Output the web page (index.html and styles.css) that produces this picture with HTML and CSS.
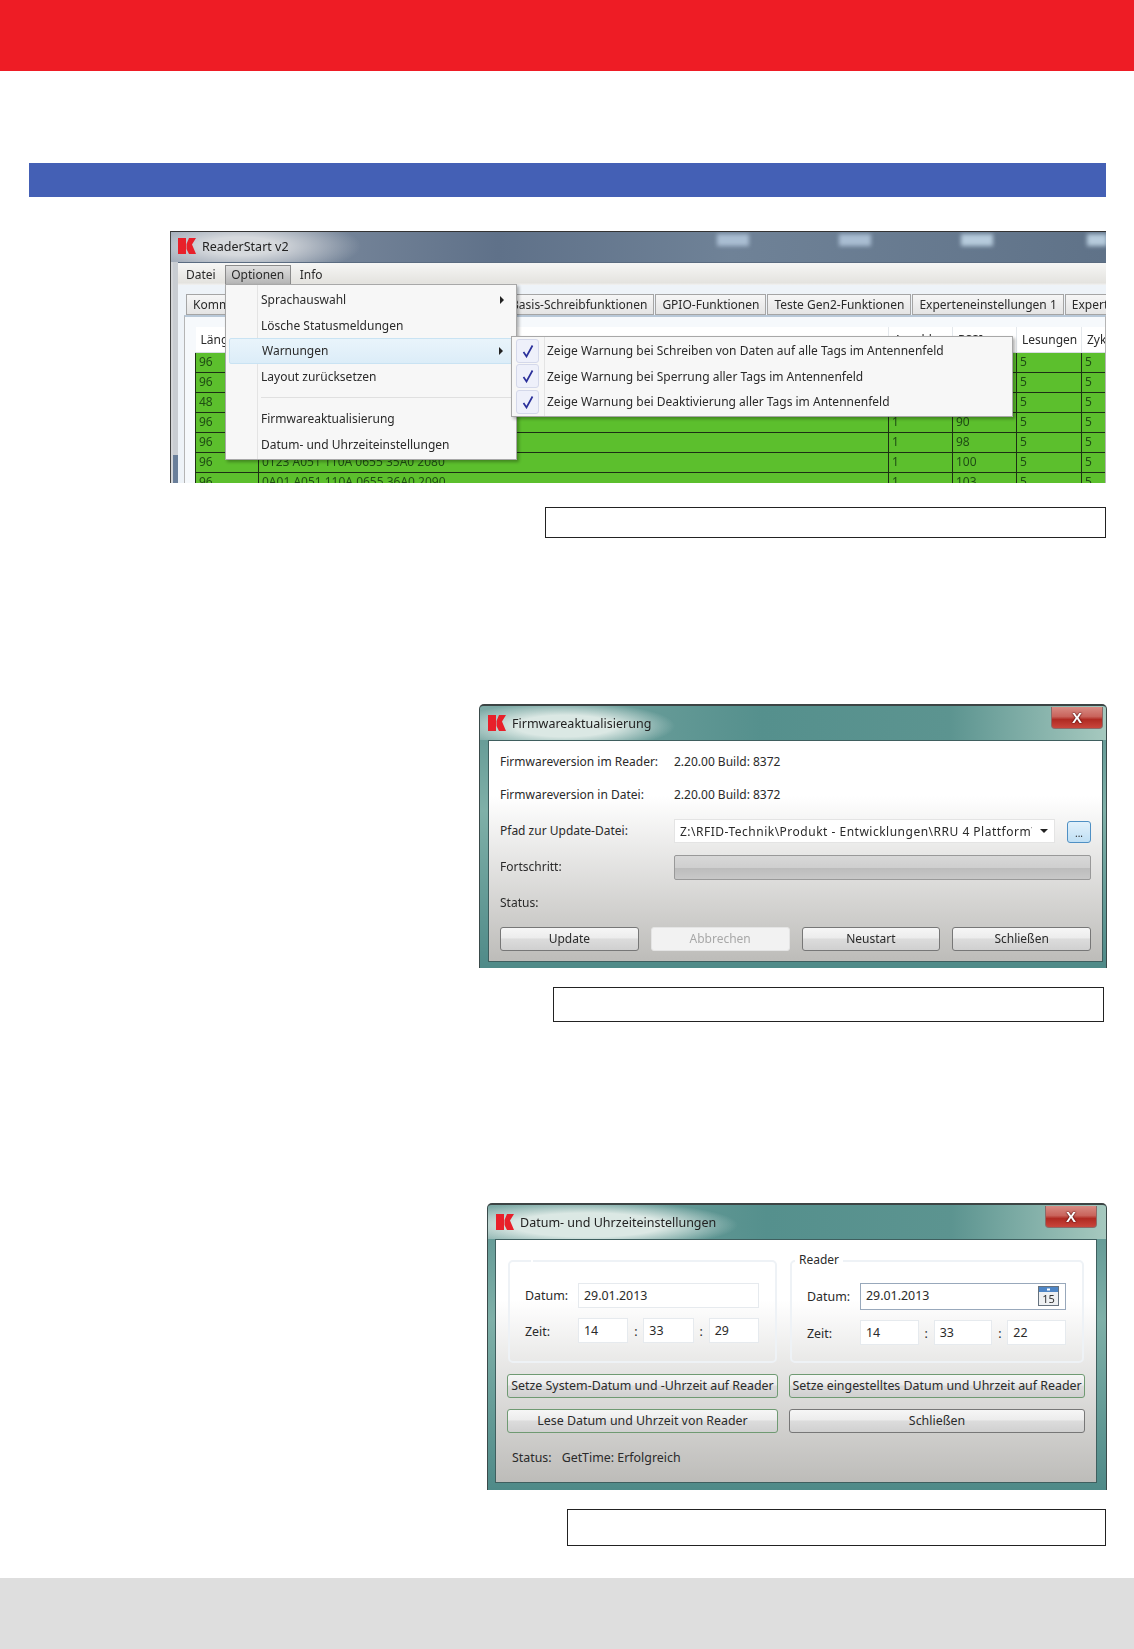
FILE: index.html
```html
<!DOCTYPE html>
<html lang="de">
<head>
    <meta charset="UTF-8">
    <title>ReaderStart v2</title>
    <link rel="stylesheet" href="styles.css">
</head>
<body>
    <svg class="defs" width="0" height="0">
        <symbol id="logo" viewBox="0 0 18 16">
            <path d="M0 0h8v16H0zM8.500 6 11 0h7l-4 6.500L18 16h-7l-2.500-5z"/>
        </symbol>
        <symbol id="check" viewBox="0 0 12 14">
            <path d="M1.500 8l3 4.500L10.500 1.500" fill="none" stroke="currentColor" stroke-width="1.700"/>
        </symbol>
    </svg>

    <div class="topbar"></div>

    <main class="content">
        <div class="bluebar"></div>

        <!-- Hauptfenster mit geoeffnetem Menue -->
        <div class="shot main-shot">
            <div class="titlebar grey">
                <svg class="logo"><use href="#logo"/></svg>
                <span class="title">ReaderStart v2</span>
                <i class="glow g1"></i><i class="glow g2"></i><i class="glow g3"></i><i class="glow g4"></i>
            </div>
            <div class="app">
                <div class="menubar">
                    <span class="menu-item">Datei</span>
                    <span class="menu-item open">Optionen</span>
                    <span class="menu-item">Info</span>
                </div>
                <div class="tabs">
                    <span class="tab tab-first">Kommunikation</span>
                    <span class="tab">Basis-Schreibfunktionen</span>
                    <span class="tab">GPIO-Funktionen</span>
                    <span class="tab">Teste Gen2-Funktionen</span>
                    <span class="tab">Experteneinstellungen 1</span>
                    <span class="tab">Experteneinstellungen 2</span>
                </div>
                <div class="panel">
                    <table class="tags">
                        <colgroup>
                            <col class="c-len"><col class="c-epc"><col class="c-n"><col class="c-n"><col class="c-les"><col class="c-n">
                        </colgroup>
                        <thead>
                            <tr><th>Länge</th><th>EPC</th><th>Anzahl</th><th>RSSI</th><th>Lesungen</th><th>Zyklen</th></tr>
                        </thead>
                        <tbody>
                            <tr><td>96</td><td></td><td></td><td></td><td>5</td><td>5</td></tr>
                            <tr><td>96</td><td></td><td></td><td></td><td>5</td><td>5</td></tr>
                            <tr><td>48</td><td></td><td></td><td></td><td>5</td><td>5</td></tr>
                            <tr><td>96</td><td></td><td>1</td><td>90</td><td>5</td><td>5</td></tr>
                            <tr><td>96</td><td></td><td>1</td><td>98</td><td>5</td><td>5</td></tr>
                            <tr><td>96</td><td>0123 A051 110A 0655 35A0 2080</td><td>1</td><td>100</td><td>5</td><td>5</td></tr>
                            <tr><td>96</td><td>0A01 A051 110A 0655 36A0 2090</td><td>1</td><td>103</td><td>5</td><td>5</td></tr>
                        </tbody>
                    </table>
                </div>
            </div>

            <div class="popup options-menu">
                <div class="pop-row"><span>Sprachauswahl</span><i class="arrow"></i></div>
                <div class="pop-row">Lösche Statusmeldungen</div>
                <div class="pop-row active"><span>Warnungen</span><i class="arrow"></i></div>
                <div class="pop-row">Layout zurücksetzen</div>
                <div class="pop-sep"></div>
                <div class="pop-row">Firmwareaktualisierung</div>
                <div class="pop-row">Datum- und Uhrzeiteinstellungen</div>
            </div>
            <div class="popup warn-menu">
                <div class="warn-row"><span class="tick"><svg><use href="#check"/></svg></span>Zeige Warnung bei Schreiben von Daten auf alle Tags im Antennenfeld</div>
                <div class="warn-row"><span class="tick"><svg><use href="#check"/></svg></span>Zeige Warnung bei Sperrung aller Tags im Antennenfeld</div>
                <div class="warn-row"><span class="tick"><svg><use href="#check"/></svg></span>Zeige Warnung bei Deaktivierung aller Tags im Antennenfeld</div>
            </div>
        </div>
        <div class="caption cap-one"></div>

        <!-- Firmwareaktualisierung -->
        <div class="shot dialog fw-dialog">
            <div class="titlebar teal">
                <svg class="logo"><use href="#logo"/></svg>
                <span class="title">Firmwareaktualisierung</span>
                <span class="close">X</span>
            </div>
            <div class="client fw-client">
                <div class="fw-row"><span>Firmwareversion im Reader:</span><span>2.20.00 Build: 8372</span></div>
                <div class="fw-row"><span>Firmwareversion in Datei:</span><span>2.20.00 Build: 8372</span></div>
                <div class="fw-row">
                    <span>Pfad zur Update-Datei:</span>
                    <div class="path-line">
                        <div class="combo"><span class="combo-text">Z:\RFID-Technik\Produkt - Entwicklungen\RRU 4 Plattform\Gen2</span><i class="caret"></i></div>
                        <span class="browse">...</span>
                    </div>
                </div>
                <div class="fw-row"><span>Fortschritt:</span><div class="progress"></div></div>
                <div class="fw-row"><span>Status:</span><span></span></div>
                <div class="fw-buttons">
                    <span class="btn">Update</span>
                    <span class="btn disabled">Abbrechen</span>
                    <span class="btn">Neustart</span>
                    <span class="btn">Schließen</span>
                </div>
            </div>
        </div>
        <div class="caption cap-two"></div>

        <!-- Datum und Uhrzeit -->
        <div class="shot dialog time-dialog">
            <div class="titlebar teal">
                <svg class="logo"><use href="#logo"/></svg>
                <span class="title">Datum- und Uhrzeiteinstellungen</span>
                <span class="close">X</span>
            </div>
            <div class="client time-client">
                <div class="time-grid">
                    <fieldset class="group">
                        <legend class="blank"></legend>
                        <div class="field-row"><span>Datum:</span><div class="input date">29.01.2013</div></div>
                        <div class="field-row"><span>Zeit:</span>
                            <div class="clock"><div class="input">14</div><b>:</b><div class="input">33</div><b>:</b><div class="input">29</div></div>
                        </div>
                    </fieldset>
                    <fieldset class="group">
                        <legend>Reader</legend>
                        <div class="field-row"><span>Datum:</span>
                            <div class="input date picker">29.01.2013
                                <svg class="cal" viewBox="0 0 21 20">
                                    <rect x=".5" y=".5" width="20" height="19" fill="#eef0f2" stroke="#66727e"/>
                                    <rect x="1" y="1" width="19" height="5" fill="#4f86c6"/>
                                    <rect x="9" y="2.500" width="3" height="2" fill="#fff"/>
                                    <text x="10.500" y="17" text-anchor="middle" class="cal-day">15</text>
                                </svg>
                            </div>
                        </div>
                        <div class="field-row"><span>Zeit:</span>
                            <div class="clock"><div class="input">14</div><b>:</b><div class="input">33</div><b>:</b><div class="input">22</div></div>
                        </div>
                    </fieldset>
                    <span class="btn green">Setze System-Datum und -Uhrzeit auf Reader</span>
                    <span class="btn green">Setze eingestelltes Datum und Uhrzeit auf Reader</span>
                    <span class="btn green">Lese Datum und Uhrzeit von Reader</span>
                    <span class="btn">Schließen</span>
                </div>
                <div class="status"><span>Status:</span><span>GetTime: Erfolgreich</span></div>
            </div>
        </div>
        <div class="caption cap-three"></div>
    </main>

    <footer class="footer"></footer>
</body>
</html>
```

FILE: styles.css
```css
* { box-sizing: border-box; }
html, body { margin: 0; padding: 0; }
body { background: #fff; font-family: "Noto Sans", "Open Sans", sans-serif; font-size: 12px; color: #2a2a2a; }
.defs { position: absolute; }

.topbar { height: 71px; background: #ee1c25; }
.content { height: 1507px; padding: 92px 28px 0 29px; display: flex; flex-direction: column; align-items: flex-end; }
.bluebar { width: 100%; height: 34px; background: #4460b5; flex: none; }
.footer { height: 71px; background: #dedede; }

.caption { border: 1px solid #222; background: #fff; flex: none; }
.cap-one { width: 561px; height: 31px; margin-top: 24px; }
.cap-two { width: 551px; height: 35px; margin-top: 19px; margin-right: 2px; }
.cap-three { width: 539px; height: 37px; margin-top: 19px; }

/* screenshots */
.shot { position: relative; flex: none; overflow: hidden; filter: blur(.35px); }
.main-shot { width: 936px; height: 252px; margin-top: 34px; background: linear-gradient(90deg, #d4d6d9 2px, transparent 2px), linear-gradient(#c9cdd2 223px, #6a7f9a 223px); border-top: 1px solid #333; border-left: 1px solid #444; }
.dialog { background: linear-gradient(#5c9390, #7fb0a8 40%, #4f8a88); border: 1px solid #3a4a4a; border-top: 2px solid #3c4444; border-bottom: 0; }
.fw-dialog { width: 628px; height: 264px; margin-top: 166px; margin-right: -1px; padding: 0 3px 6px 8px; border-radius: 5px 5px 0 0; display: flex; flex-direction: column; }
.time-dialog { width: 620px; height: 287px; margin-top: 181px; margin-right: -1px; padding: 0 9px 7px 7px; border-radius: 5px 5px 0 0; display: flex; flex-direction: column; }

.titlebar { display: flex; align-items: center; flex: none; position: relative; }
.logo { width: 18px; height: 16px; fill: #e8202a; flex: none; }
.title { margin-left: 6px; font-size: 12.500px; color: #222; position: relative; }
.titlebar.grey { height: 30px; padding: 0 0 2px 7px; background: radial-gradient(ellipse 120px 30px at 70px 14px, #d6d9dd 30%, transparent 100%), linear-gradient(90deg, #8a97a8, #5f7189 35%, #6f8297 60%, #5f7288 100%); }
.titlebar.teal { height: 34px; margin: 0 -3px 0 -8px; padding-left: 8px; background: radial-gradient(ellipse 110px 24px at 85px 20px, #dbe8e4 45%, transparent 100%), linear-gradient(90deg, #7eaaa6, #55908d 45%, #5c9490 75%, #a6c9bf 100%); }
.time-dialog .titlebar.teal { margin: 0 -9px 0 -7px; padding-left: 8px; background: radial-gradient(ellipse 150px 24px at 100px 20px, #dbe8e4 50%, transparent 100%), linear-gradient(90deg, #7eaaa6, #55908d 45%, #5c9490 75%, #a6c9bf 100%); }
.close { position: absolute; right: 3px; top: 1px; width: 52px; height: 22px; border: 1px solid #8a6a68; border-top: 0; border-radius: 0 0 4px 4px; background: linear-gradient(#d88c84, #c9645c 45%, #b02a22 60%, #c9463c); color: #fff; font: bold 15px "Liberation Sans", sans-serif; text-align: center; line-height: 21px; text-shadow: 0 0 2px #400, 0 0 1px #400; }
.time-dialog .close { right: 9px; }

.glow { position: absolute; top: 2px; height: 12px; background: #a9bdd2; filter: blur(2px); }
.g1 { left: 546px; width: 32px; }
.g2 { left: 668px; width: 32px; }
.g3 { left: 790px; width: 32px; background: #b6cbdc; }
.g4 { left: 916px; width: 20px; background: #b6cbdc; }

/* Hauptfenster */
.app { margin-left: 7px; height: 222px; background: #eef3f8; border-top: 1px solid #5a6b80; }
.menubar { height: 22px; display: flex; align-items: center; padding: 2px 0 0 2px; background: linear-gradient(#f6f6f5, #e4e3df 90%, #f2f2f2); }
.menu-item { padding: 0 6px; line-height: 20px; margin-right: 2px; }
.menu-item.open { padding: 0 5.500px; background: linear-gradient(#e0e0e0, #b5b5b5); border: 1px solid #8b8b8b; line-height: 18px; margin: 0 3px 0 1px; }
.tabs { display: flex; margin: 9px 0 0 8px; height: 21px; background: #eef3f8; }
.tab { display: block; flex: none; height: 21px; padding: 0 6px; line-height: 19px; white-space: nowrap; background: linear-gradient(#f6f6f6, #e4e4e4); border: 1px solid #a5a5a5; margin-right: 1px; }
.tab-first { width: 317px; }
.panel { margin: 0 0 0 6px; height: 170px; padding: 10px 0 0 10px; border: 1px solid #b5b5b5; border-top: 2px solid #b8c8d8; background: #f6f9fc; overflow: hidden; }
.tags { width: 946px; table-layout: fixed; border-collapse: collapse; }
.c-len { width: 63px; }
.c-epc { width: 630px; }
.c-n { width: 64px; }
.c-les { width: 65px; }
.tags th { height: 25px; background: #fff; font-weight: normal; text-align: left; padding: 0 0 0 5px; border-right: 1px solid #e4e8ec; border-bottom: 1px solid #d8dde2; white-space: nowrap; overflow: hidden; }
.tags td { height: 20px; padding: 0 0 0 3px; background: #5cbf2d; color: #1f4d14; border: 1px solid #1c2f14; white-space: nowrap; overflow: hidden; line-height: 18px; }

.popup { position: absolute; background: #f7f7f7; border: 1px solid #a8a8a8; box-shadow: 2px 2px 3px rgba(0,0,0,.3); }
.options-menu { left: 54px; top: 52px; width: 292px; height: 176px; padding: 2px 0; z-index: 1; background: linear-gradient(90deg, #f7f7f7 31px, #e4e4e4 31px, #e4e4e4 32px, #f7f7f7 32px); }
.warn-menu { left: 340px; top: 104px; width: 502px; height: 81px; padding: 1px 0; z-index: 2; background: linear-gradient(90deg, #f7f7f7 32px, #e4e4e4 32px, #e4e4e4 33px, #f7f7f7 33px); }
.pop-row { height: 25.500px; line-height: 25px; padding: 0 12px 0 35px; display: flex; justify-content: space-between; align-items: center; }
.pop-row.active { margin: 0 0 0 3px; padding-left: 32px; background: linear-gradient(#e9f4fb, #dcedf8); border: 1px solid #c9e3f3; border-radius: 2px; }
.pop-sep { height: 17px; margin-left: 35px; background: linear-gradient(#e0e0e0, #e0e0e0) center / 100% 1px no-repeat; }
.arrow { width: 0; height: 0; border-left: 4px solid #222; border-top: 4px solid transparent; border-bottom: 4px solid transparent; }
.warn-row { height: 25.500px; display: flex; align-items: center; padding-left: 4px; white-space: nowrap; }
.tick { width: 23px; height: 24px; margin-right: 8px; flex: none; display: flex; align-items: center; justify-content: center; background: #eef0fa; border: 1px solid #d4d8ea; border-radius: 3px; color: #2a2f9a; }
.tick svg { width: 12px; height: 14px; }

/* Dialoge */
.client { flex: 1; background: linear-gradient(#fff 25%, #bdbcb9); border: 1px solid #3f5f5f; }
.btn { display: block; height: 24px; line-height: 22px; text-align: center; white-space: nowrap; background: linear-gradient(#f6f6f6, #ececec 45%, #dcdcdc 50%, #d0d0d0); border: 1px solid #777; border-radius: 3px; }
.btn.disabled { color: #a8a8a8; background: #f2f2f2; border-color: #e4e4e4; }
.btn.green { border-color: #6f9a72; }

.fw-client { padding: 9px 11px 0; display: grid; grid-template-columns: 174px minmax(0, 1fr); grid-template-rows: 21px repeat(5, 24px); row-gap: 12px; align-content: start; }
.fw-row { display: contents; }
.fw-row > span { line-height: 24px; }
.path-line { display: flex; gap: 12px; min-width: 0; }
.combo { flex: 1; min-width: 0; display: flex; align-items: center; padding: 0 6px 0 5px; background: #fff; border: 1px solid #e4e4e4; }
.combo-text { flex: 1; min-width: 0; overflow: hidden; white-space: nowrap; letter-spacing: .5px; }
.caret { margin-left: 8px; flex: none; width: 0; height: 0; border-top: 4px solid #222; border-left: 4px solid transparent; border-right: 4px solid transparent; }
.browse { width: 24px; height: 22px; margin-top: 2px; flex: none; font-size: 10px; line-height: 22px; text-align: center; background: linear-gradient(#e2f1fb, #bfdff4); border: 1px solid #4f90c4; border-radius: 3px; }
.progress { height: 25px; border: 1px solid #999; border-radius: 2px; background: linear-gradient(#d8d8d8, #cfcfcf 50%, #bcbcbc 52%, #c8c8c8); }
.fw-buttons { grid-column: 1 / -1; display: grid; grid-template-columns: repeat(4, 1fr); column-gap: 12px; }

.time-client { padding: 0 12px 0 11px; font-size: 12.400px; }
.time-grid { display: grid; grid-template-columns: 271px 296px; column-gap: 11px; grid-template-rows: 110px 24px 24px; row-gap: 11px; margin-top: 13px; }
.group { margin: 0 1px; padding: 14px 16px 0 15px; border: 2px solid #eef2f6; border-radius: 5px; min-width: 0; }
.group legend { padding: 0 4px; margin-left: -12px; font-size: 12px; height: 16px; line-height: 14px; }
.group legend.blank { margin-left: 6px; width: 2px; padding: 0; height: 16px; }
.field-row { display: grid; grid-template-columns: 53px 1fr; align-items: center; margin-bottom: 10px; }
.input { height: 25px; line-height: 23px; padding: 0 5px; background: #fff; border: 1px solid #e6eaee; }
.picker { position: relative; height: 27px; border-color: #98a8bb; }
.cal { position: absolute; right: 6px; top: 2px; width: 21px; height: 20px; }
.cal-day { font-size: 11px; fill: #333; }
.clock { display: grid; grid-template-columns: 1fr 15px 1fr 15px 1fr; }
.clock b { text-align: center; font-weight: normal; line-height: 27px; }
.status { display: flex; gap: 10px; margin: 16px 0 0 5px; }
```
